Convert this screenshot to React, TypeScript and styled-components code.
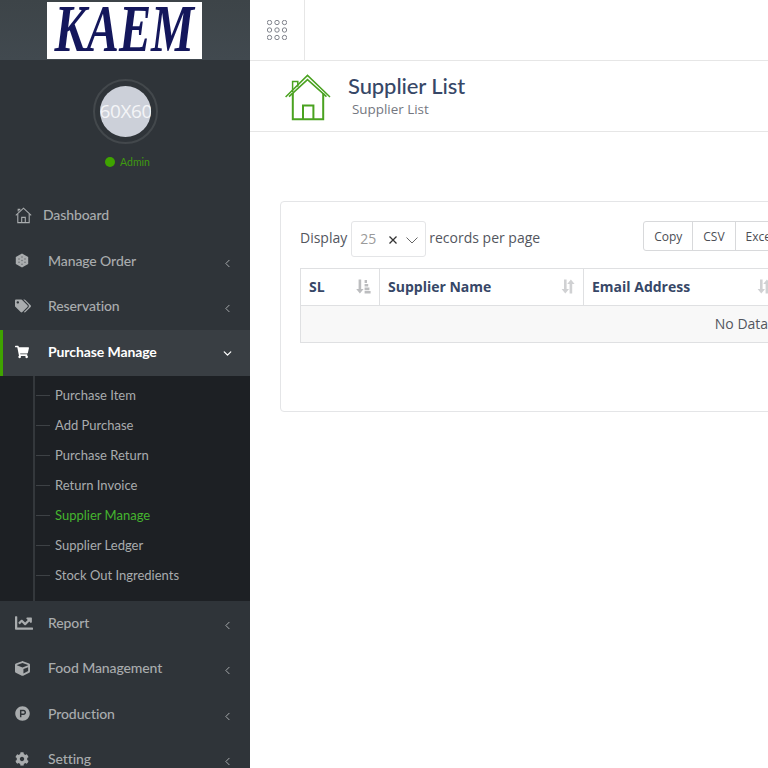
import styled, { createGlobalStyle } from "styled-components";
import { FaChartLine, FaCog, FaCube, FaProductHunt, FaShoppingCart, FaTags } from "react-icons/fa";
import { ChevronDown, ChevronLeft } from "lucide-react";
import { ReactNode } from "react";

const GlobalStyle = createGlobalStyle`
    html, body {
        margin: 0;
        padding: 0;
        height: 100%;
        overflow: hidden;
        background: #fff;
        font-family: "Open Sans", "Liberation Sans", sans-serif;
    }
`;

const Wrapper = styled.div`
    display: flex;
    width: 768px;
    height: 768px;
    overflow: hidden;
`;

const Sidebar = styled.aside`
    flex: 0 0 250px;
    height: 768px;
    overflow: hidden;
    background: #2f3439;
    font-family: Lato, "Liberation Sans", sans-serif;
`;

const LogoBar = styled.div`
    height: 60px;
    display: flex;
    justify-content: center;
    padding-top: 2px;
    box-sizing: border-box;
    background: linear-gradient(#3d4448, #41494f);
`;

const LogoBox = styled.div`
    width: 155px;
    height: 57px;
    margin-left: -1px;
    background: #fff;
    display: flex;
    align-items: flex-start;
    justify-content: center;
`;

const LogoText = styled.span`
    font-family: "Liberation Serif", serif;
    font-style: italic;
    font-weight: 700;
    font-size: 68px;
    line-height: 53px;
    color: #14175c;
    transform: scaleX(0.71);
    white-space: nowrap;
`;

const UserPanel = styled.div`
    display: flex;
    flex-direction: column;
    align-items: center;
    padding-top: 19px;
    height: 133.5px;
    box-sizing: border-box;
`;

const AvatarRing = styled.div`
    width: 65px;
    height: 65px;
    box-sizing: border-box;
    border: 2px solid #43484c;
    border-radius: 50%;
    display: flex;
    align-items: center;
    justify-content: center;
`;

const Avatar = styled.div`
    width: 51px;
    height: 51px;
    border-radius: 50%;
    background: #ccd0d9;
    color: #f4f5f7;
    font-family: "Open Sans", sans-serif;
    font-size: 19px;
    line-height: 51px;
    text-align: center;
    overflow: hidden;
    white-space: nowrap;
    letter-spacing: -0.4px;
`;

const Status = styled.div`
    margin: 11px 0 0 5px;
    display: flex;
    align-items: center;
    gap: 5px;
    font-size: 10.5px;
    line-height: 14px;
    color: #3f9a10;
`;

const StatusDot = styled.span`
    width: 10px;
    height: 10px;
    border-radius: 50%;
    background: #3fa300;
`;

const MenuRow = styled.div<{ $active?: boolean }>`
    height: ${(p) => (p.$active ? "46px" : "45.5px")};
    display: flex;
    align-items: center;
    box-sizing: border-box;
    padding-left: ${(p) => (p.$active ? "12px" : "15px")};
    padding-bottom: 2px;
    border-left: ${(p) => (p.$active ? "3px solid #3fa300" : "none")};
    background: ${(p) => (p.$active ? "#393e43" : "transparent")};
    color: ${(p) => (p.$active ? "#fff" : "#a9acae")};
    font-size: 14px;
    letter-spacing: -0.1px;
    font-weight: ${(p) => (p.$active ? 700 : 500)};
`;

const MenuIcon = styled.span<{ $compact?: boolean }>`
    flex: 0 0 ${(p) => (p.$compact ? "28px" : "33px")};
    display: flex;
    align-items: center;
`;

const MenuLabel = styled.span`
    flex: 1;
    white-space: nowrap;
    margin-top: -1px;
`;

const MenuArrow = styled.span<{ $open?: boolean }>`
    flex: 0 0 29px;
    display: flex;
    margin-top: ${(p) => (p.$open ? "3px" : "5px")};
`;

const SubMenu = styled.div`
    height: 225px;
    box-sizing: border-box;
    background: #1d2024;
    padding: 4px 0 11px 33px;
`;

const SubList = styled.div`
    margin-top: -4px;
    padding-top: 4px;
    height: 225px;
    box-sizing: border-box;
    border-left: 2px solid #34383c;
`;

const SubItem = styled.div<{ $active?: boolean }>`
    height: 30px;
    display: flex;
    align-items: center;
    gap: 5px;
    font-size: 13px;
    color: ${(p) => (p.$active ? "#45b52f" : "#a9acae")};
    white-space: nowrap;
    &::before {
        content: "";
        width: 14px;
        height: 1px;
        margin-left: 1px;
        background: #3d4145;
    }
`;

const Main = styled.main`
    flex: 1;
    min-width: 0;
    overflow: hidden;
`;

const TopBar = styled.div`
    height: 61px;
    box-sizing: border-box;
    border-bottom: 1px solid #e6e6e6;
    display: flex;
`;

const AppsButton = styled.div`
    width: 55px;
    box-sizing: border-box;
    border-right: 1px solid #e6e6e6;
    display: flex;
    align-items: center;
    justify-content: center;
`;

const PageHeader = styled.div`
    height: 71px;
    box-sizing: border-box;
    border-bottom: 1px solid #e6e6e6;
    padding: 13px 0 0 35px;
    display: flex;
    gap: 17px;
`;

const TitleBlock = styled.div`
    display: flex;
    flex-direction: column;
`;

const Title = styled.h1`
    margin: 0;
    font-family: Lato, sans-serif;
    font-size: 22px;
    line-height: 24px;
    font-weight: 500;
    letter-spacing: -0.1px;
    color: #374767;
`;

const SubTitle = styled.span`
    margin: 2px 0 0 4px;
    font-size: 13.4px;
    line-height: 18px;
    font-weight: 500;
    color: #74777f;
`;

const Content = styled.div`
    padding: 69px 0 0 30px;
`;

const Card = styled.section`
    width: 990px;
    height: 211px;
    box-sizing: border-box;
    border: 1px solid #e4e5e7;
    border-radius: 4px;
    padding: 19px 19px 0;
`;

const Controls = styled.div`
    display: flex;
    align-items: flex-start;
    justify-content: space-between;
    height: 47px;
`;

const LengthControl = styled.div`
    display: flex;
    align-items: flex-start;
    gap: 4px;
    height: 36px;
    font-size: 14px;
    line-height: 33px;
    color: #53565e;
`;

const SelectBox = styled.div`
    width: 75px;
    height: 36px;
    margin-right: -1px;
    box-sizing: border-box;
    border: 1px solid #e4e5e7;
    border-radius: 3px;
    display: flex;
    align-items: center;
    padding-left: 8px;
    color: #9a9a9a;
`;

const SelectValue = styled.span`
    flex: 0 0 28px;
    line-height: 32px;
`;

const ClearMark = styled.svg`
    margin-top: 1px;
`;

const CaretMark = styled.svg`
    margin: 1px 0 0 7px;
`;

const ButtonGroup = styled.div`
    display: flex;
    margin-right: 374px;
`;

const ExportButton = styled.button`
    height: 30px;
    padding: 0 10px;
    background: #fff;
    border: 1px solid #d8d9db;
    margin-left: -1px;
    font-family: inherit;
    font-size: 12px;
    color: #4b4e55;
    &:first-child {
        border-radius: 3px 0 0 3px;
    }
`;

const Table = styled.table`
    width: 944px;
    border-collapse: collapse;
    table-layout: fixed;
`;

const HeadCell = styled.th`
    height: 37px;
    box-sizing: border-box;
    border: 1px solid #dfe0e2;
    padding: 0 8px;
    text-align: left;
    font-size: 14px;
    line-height: 17px;
    font-weight: 700;
    color: #374767;
`;

const HeadInner = styled.div`
    display: flex;
    align-items: center;
    justify-content: space-between;
    white-space: nowrap;
    margin-top: -2px;
`;

const EmptyCell = styled.td`
    height: 37px;
    box-sizing: border-box;
    border: 1px solid #dfe0e2;
    background: #f8f8f8;
    text-align: center;
    font-size: 14px;
    line-height: 17px;
    padding-bottom: 3px;
    color: #53565e;
`;

function HomeOutline() {
    return (
        <svg width="17" height="17" viewBox="0 0 17 17" fill="none" stroke="#a9acae" strokeWidth="1.1">
            <path d="M0.8 8.3 8.5 1.2 16.2 8.3" />
            <path d="M2.8 7v8.6h11.4V7" />
            <path d="M6.7 15.6V10.4h3.6v5.2" />
            <path d="M3.2 4.6V2.4h1.6v1" />
        </svg>
    );
}

function OrderIcon() {
    return (
        <svg width="14" height="15" viewBox="0 0 14 15">
            <path d="M7 0.5 13.2 4v7L7 14.5.8 11V4z" fill="#a9acae" />
            <g fill="#6d7175">
                <circle cx="7" cy="4" r="0.8" />
                <circle cx="4" cy="6" r="0.8" />
                <circle cx="10" cy="6" r="0.8" />
                <circle cx="7" cy="7.5" r="0.8" />
                <circle cx="4" cy="9.3" r="0.8" />
                <circle cx="10" cy="9.3" r="0.8" />
                <circle cx="7" cy="11.2" r="0.8" />
            </g>
        </svg>
    );
}

function AppsIcon() {
    const cells = [2.5, 10, 17.5];
    return (
        <svg width="20" height="20" viewBox="0 0 20 20" fill="none" stroke="#72757f" strokeWidth="0.9">
            {cells.map((cy) => cells.map((cx) => <circle key={`${cx}-${cy}`} cx={cx} cy={cy} r="2.2" />))}
        </svg>
    );
}

function PageHomeIcon() {
    return (
        <svg width="46" height="47" viewBox="0 0 46 47" fill="none" stroke="#4aa220">
            <path d="M0.6 23 22.5 1.4 45 23" strokeWidth="1.5" />
            <path d="M4 22.6 22.5 5.6 41.5 22.6" strokeWidth="1.5" />
            <path d="M7.6 18V7.6h5.2v5.2" strokeWidth="1.5" />
            <path d="M7.8 19v26.2h30.4V19" strokeWidth="2" />
            <path d="M18 45V31.5h10.4V45" strokeWidth="2" />
        </svg>
    );
}

function SortSingle() {
    return (
        <svg width="15" height="15" viewBox="0 0 15 15" fill="#bcbdbf">
            <path d="M2.6 0.5h2.6v9.5h2.4L3.9 14.5.2 10h2.4z" />
            <path d="M8.6 1h2.4v3H8.6zM8.6 5h3.6v2.6H8.6zM8.6 8.6h4.8v2.6H8.6zM8.6 12h6v2.6h-6z" />
        </svg>
    );
}

function SortBoth() {
    return (
        <svg width="14" height="15" viewBox="0 0 14 15" fill="#d0d1d3">
            <path d="M3 0.5h2.6v9.5h2.4L4.3 14.5.6 10H3z" />
            <path d="M8.6 14.5h2.6V5h2.4L9.9.5 6.2 5h2.4z" />
        </svg>
    );
}

const collapsedTop: [ReactNode, string][] = [
    [<OrderIcon />, "Manage Order"],
    [<FaTags size={16} />, "Reservation"],
];

const collapsedBottom: [ReactNode, string][] = [
    [<FaChartLine size={18} />, "Report"],
    [<FaCube size={15} />, "Food Management"],
    [<FaProductHunt size={15} />, "Production"],
    [<FaCog size={14} />, "Setting"],
];

const purchaseItems = [
    "Purchase Item",
    "Add Purchase",
    "Purchase Return",
    "Return Invoice",
    "Supplier Manage",
    "Supplier Ledger",
    "Stock Out Ingredients",
];

const columns = ["Supplier Name", "Email Address", "Mobile", "Address", "Action"];

export default function App() {
    const renderRow = ([icon, label]: [ReactNode, string]) => (
        <MenuRow key={label}>
            <MenuIcon>{icon}</MenuIcon>
            <MenuLabel>{label}</MenuLabel>
            <MenuArrow><ChevronLeft size={13} strokeWidth={1.8} /></MenuArrow>
        </MenuRow>
    );
    return <Wrapper>
        <GlobalStyle />
        <Sidebar>
            <LogoBar>
                <LogoBox><LogoText>KAEM</LogoText></LogoBox>
            </LogoBar>
            <UserPanel>
                <AvatarRing><Avatar>60X60</Avatar></AvatarRing>
                <Status><StatusDot />Admin</Status>
            </UserPanel>
            <MenuRow>
                <MenuIcon $compact><HomeOutline /></MenuIcon>
                <MenuLabel>Dashboard</MenuLabel>
            </MenuRow>
            {collapsedTop.map(renderRow)}
            <MenuRow $active>
                <MenuIcon><FaShoppingCart size={14} /></MenuIcon>
                <MenuLabel>Purchase Manage</MenuLabel>
                <MenuArrow $open><ChevronDown size={13} strokeWidth={2.4} /></MenuArrow>
            </MenuRow>
            <SubMenu>
                <SubList>
                    {purchaseItems.map(item => <SubItem key={item} $active={item === "Supplier Manage"}>{item}</SubItem>)}
                </SubList>
            </SubMenu>
            {collapsedBottom.map(renderRow)}
        </Sidebar>
        <Main>
            <TopBar>
                <AppsButton><AppsIcon /></AppsButton>
            </TopBar>
            <PageHeader>
                <PageHomeIcon />
                <TitleBlock>
                    <Title>Supplier List</Title>
                    <SubTitle>Supplier List</SubTitle>
                </TitleBlock>
            </PageHeader>
            <Content>
                <Card>
                    <Controls>
                        <LengthControl>
                            Display
                            <SelectBox>
                                <SelectValue>25</SelectValue>
                                <ClearMark width="10" height="10" viewBox="0 0 10 10" stroke="#333" strokeWidth="1.3"><path d="M1.5 1.5l7 7M8.5 1.5l-7 7" /></ClearMark>
                                <CaretMark width="14" height="10" viewBox="0 0 14 10" fill="none" stroke="#666" strokeWidth="1"><path d="M1.5 2.5 7 8l5.5-5.5" /></CaretMark>
                            </SelectBox>
                            records per page
                        </LengthControl>
                        <ButtonGroup>
                            <ExportButton>Copy</ExportButton>
                            <ExportButton>CSV</ExportButton>
                            <ExportButton>Excel</ExportButton>
                            <ExportButton>PDF</ExportButton>
                            <ExportButton>Print</ExportButton>
                        </ButtonGroup>
                    </Controls>
                    <Table>
                        <colgroup>
                            <col width="79" />
                            <col width="204" />
                            <col width="196" />
                            <col width="160" />
                            <col width="180" />
                            <col width="125" />
                        </colgroup>
                        <thead>
                            <tr>
                                <HeadCell>
                                    <HeadInner>SL<SortSingle /></HeadInner>
                                </HeadCell>
                                {columns.map(col => (
                                    <HeadCell key={col}>
                                        <HeadInner>{col}<SortBoth /></HeadInner>
                                    </HeadCell>
                                ))}
                            </tr>
                        </thead>
                        <tbody>
                            <tr><EmptyCell colSpan={6}>No Data Available</EmptyCell></tr>
                        </tbody>
                    </Table>
                </Card>
            </Content>
        </Main>
    </Wrapper>;
}
